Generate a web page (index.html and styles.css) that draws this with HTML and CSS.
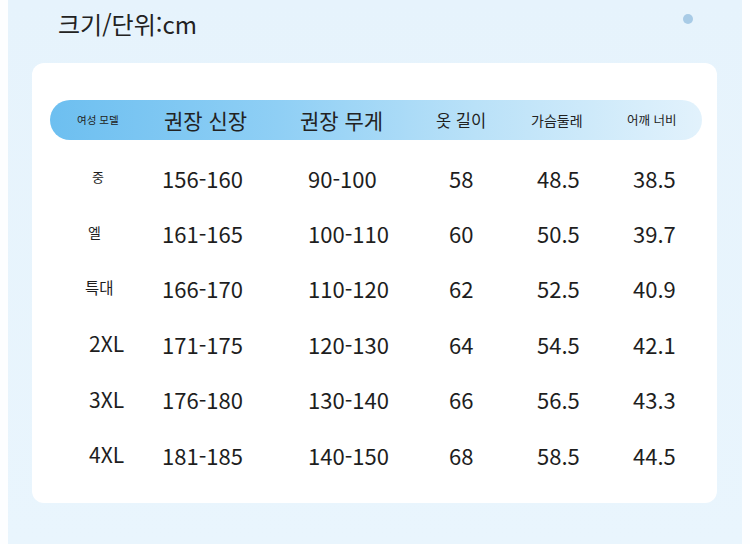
FILE: index.html
```html
<!DOCTYPE html>
<html lang="ko">
<head>
<meta charset="utf-8">
<link rel="stylesheet" href="styles.css">
</head>
<body>
<div class="panel">
  <div class="top">
    <h1 class="title">크기/단위:cm</h1>
    <span class="dot"></span>
  </div>
  <div class="card">
    <div class="pill">
      <span class="h h1">여성 모델</span>
      <span class="h h2">권장 신장</span>
      <span class="h h3">권장 무게</span>
      <span class="h h4">옷 길이</span>
      <span class="h h5">가슴둘레</span>
      <span class="h h6">어깨 너비</span>
    </div>
    <div class="rows">
      <div class="row"><span class="c1 ko k1">중</span><span>156-160</span><span>90-100</span><span>58</span><span>48.5</span><span>38.5</span></div>
      <div class="row"><span class="c1 ko k2">엘</span><span>161-165</span><span>100-110</span><span>60</span><span>50.5</span><span>39.7</span></div>
      <div class="row"><span class="c1 ko k3">특대</span><span>166-170</span><span>110-120</span><span>62</span><span>52.5</span><span>40.9</span></div>
      <div class="row"><span class="c1">2XL</span><span>171-175</span><span>120-130</span><span>64</span><span>54.5</span><span>42.1</span></div>
      <div class="row"><span class="c1">3XL</span><span>176-180</span><span>130-140</span><span>66</span><span>56.5</span><span>43.3</span></div>
      <div class="row"><span class="c1">4XL</span><span>181-185</span><span>140-150</span><span>68</span><span>58.5</span><span>44.5</span></div>
    </div>
  </div>
</div>
</body>
</html>
```
FILE: styles.css
```css
* { box-sizing: border-box; }
html, body { margin: 0; padding: 0; background: #fdfeff; }
body {
  width: 750px;
  height: 544px;
  overflow: hidden;
  font-family: "Noto Sans CJK KR", "Noto Sans", sans-serif;
  color: #1e1e1e;
}
.panel {
  margin: 0 8px;
  height: 544px;
  background: linear-gradient(180deg, #e6f3fc 0%, #e9f5fd 100%);
  display: flex;
  flex-direction: column;
}
.top {
  height: 63px;
  display: flex;
  justify-content: space-between;
  align-items: flex-start;
  padding: 0 49px 0 50px;
}
.title {
  margin: 7px 0 0 0;
  font-size: 24px;
  font-weight: 400;
  line-height: 34px;
  color: #222;
}
.dot {
  width: 10px;
  height: 10px;
  border-radius: 50%;
  background: #a8cbe6;
  margin: 14px 0 0 0;
}
.card {
  margin-left: 24px;
  width: 685px;
  height: 440px;
  background: #fff;
  border-radius: 12px;
  padding: 37px 15px 0 18px;
}
.pill {
  height: 40px;
  width: 652px;
  border-radius: 20px;
  background: linear-gradient(90deg, #6dbff0 0%, #8fcff5 35%, #b9e1f8 65%, #e2f2fc 100%);
  display: grid;
  grid-template-columns: 87px 136px 136px 95px 96px 1fr;
  align-items: center;
  padding-left: 27px;
  color: #222;
}
.h { white-space: nowrap; line-height: 1; }
.h1 { font-size: 10.5px; }
.h2, .h3 { font-size: 21px; }
.h4 { font-size: 16.5px; }
.h5 { font-size: 14px; }
.h6 { font-size: 12.5px; }
.rows {
  margin-top: 10px;
  display: flex;
  flex-direction: column;
}
.row {
  height: 55.4px;
  display: grid;
  grid-template-columns: 74px 146px 141px 88px 96px 1fr;
  align-items: center;
  padding-left: 38px;
  font-size: 22px;
  line-height: 1;
  white-space: nowrap;
}
.c1 { font-size: 21px; padding-left: 1px; }
.k1 { font-size: 13px; padding-left: 4px; margin-top: -3px; }
.k2 { font-size: 14px; margin-left: -1px; margin-top: -3px; }
.k3 { font-size: 15.5px; margin-left: -4px; margin-top: -1px; }
```
